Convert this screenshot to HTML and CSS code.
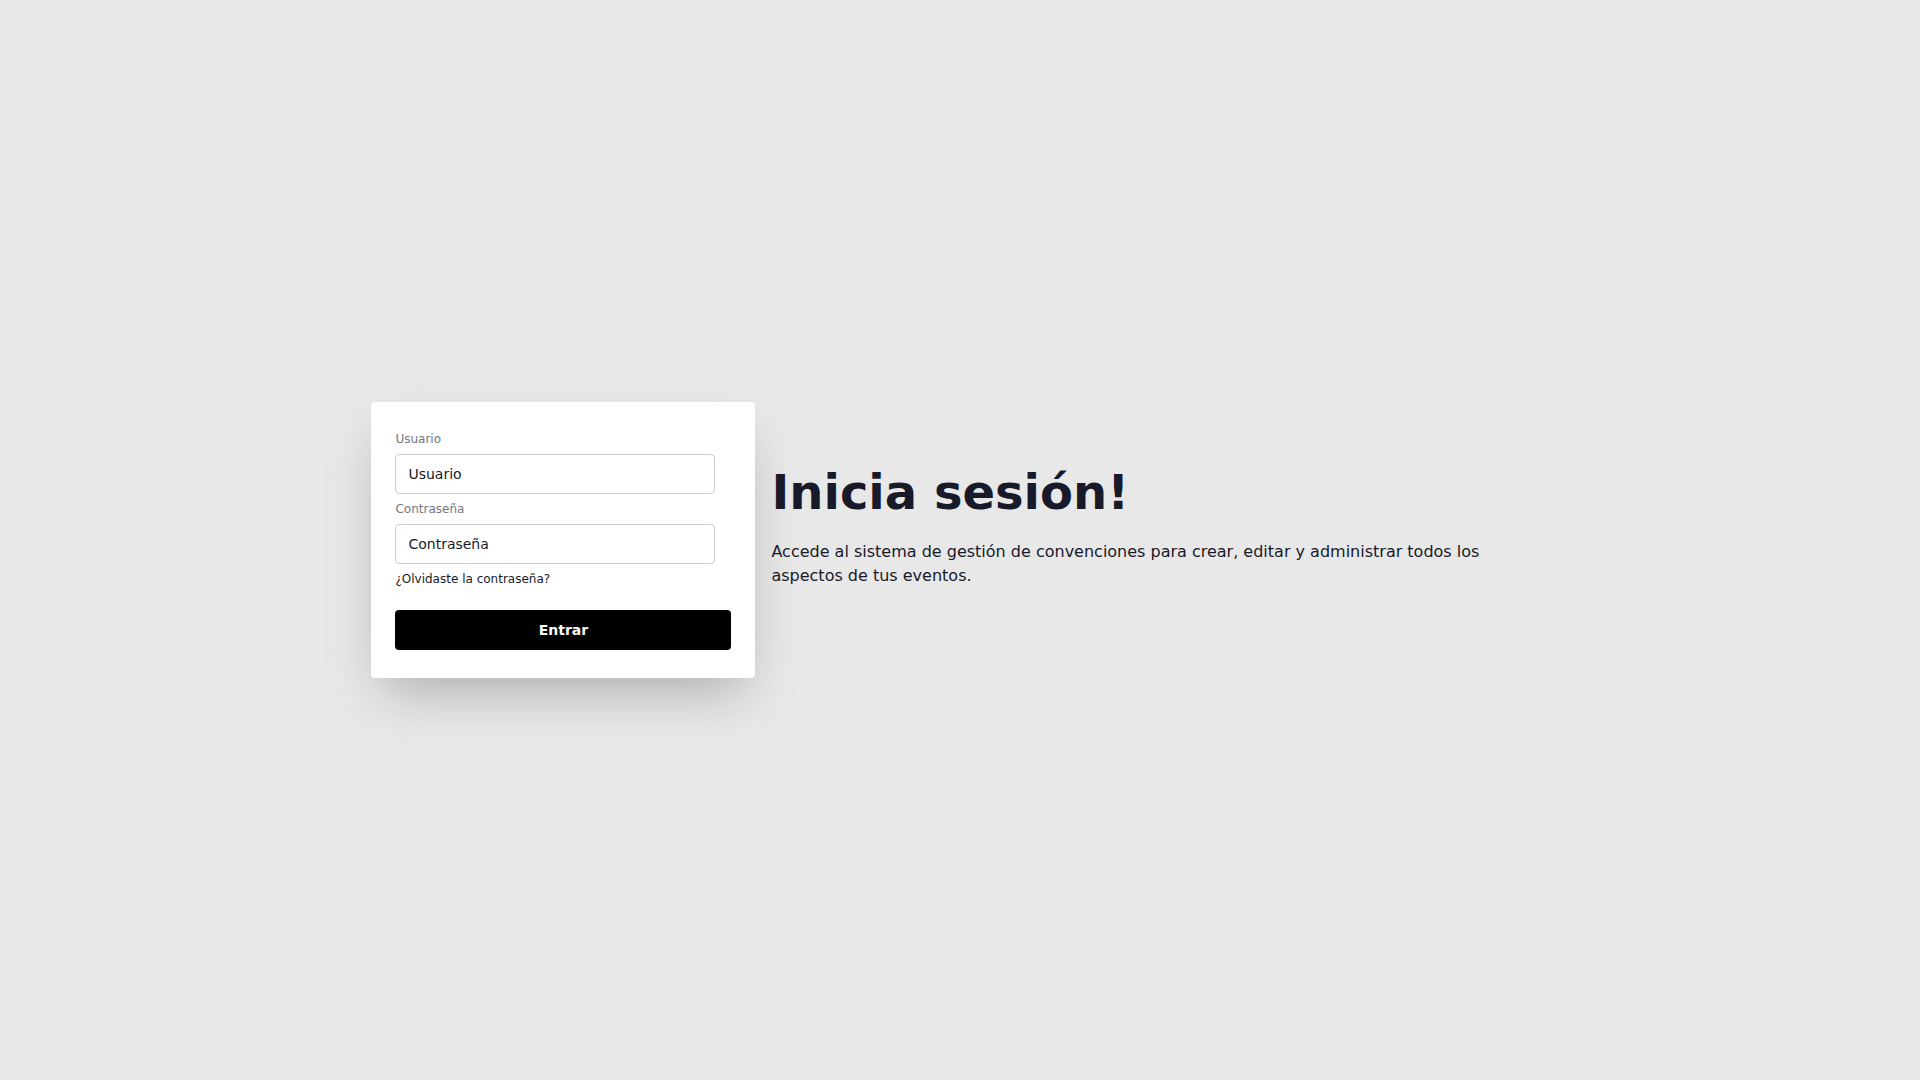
FILE: index.html
```
<!DOCTYPE html>
<html lang="es">
<head>
  <meta charset="UTF-8">
  <meta name="viewport" content="width=device-width, initial-scale=1">
  <title>Inicia sesión</title>
  <link rel="stylesheet" href="styles.css">
</head>
<body>
  <main class="hero">
    <div class="hero-content">
      <form class="card">
        <label class="label" for="usuario">Usuario</label>
        <input class="input" type="text" id="usuario" name="usuario" placeholder="Usuario">
        <label class="label" for="password">Contraseña</label>
        <input class="input" type="password" id="password" name="password" placeholder="Contraseña">
        <a class="forgot" href="#">¿Olvidaste la contraseña?</a>
        <button class="btn" type="submit">Entrar</button>
      </form>
      <div class="intro">
        <h1>Inicia sesión!</h1>
        <p>Accede al sistema de gestión de convenciones para crear, editar y administrar todos los aspectos de tus eventos.</p>
      </div>
    </div>
  </main>
</body>
</html>
```

FILE: styles.css
```
* {
  box-sizing: border-box;
}

body {
  margin: 0;
  background-color: #e8e8e8;
  color: #181a2a;
  font-family: "DejaVu Sans", sans-serif;
  font-size: 16px;
  line-height: 24px;
}

.hero {
  display: flex;
  align-items: center;
  justify-content: center;
  min-height: 100vh;
}

.hero-content {
  display: flex;
  align-items: center;
  gap: 16px;
  max-width: 1210px;
  padding: 16px;
}

/* login card */
.card {
  display: flex;
  flex-direction: column;
  align-items: flex-start;
  flex-shrink: 0;
  width: 100%;
  max-width: 384px;
  padding: 22px 24px 28px;
  border-radius: 4px;
  background-color: #fff;
  box-shadow: 0 25px 50px -12px rgba(0, 0, 0, 0.25);
}

.label,
.forgot {
  font-size: 12px;
  line-height: 30px;
}

.label {
  color: #747681;
}

.forgot {
  color: inherit;
  text-decoration: none;
}

.forgot:hover {
  text-decoration: underline;
}

.input {
  width: 100%;
  max-width: 320px;
  height: 40px;
  padding: 0 12px;
  border: 1px solid #cbcbce;
  border-radius: 4px;
  background-color: #fff;
  color: inherit;
  font-family: inherit;
  font-size: 14px;
}

.input::placeholder {
  color: #181a2a;
}

.btn {
  width: 100%;
  height: 40px;
  margin-top: 16px;
  border: 0;
  border-radius: 4px;
  background-color: #000;
  color: #fff;
  font-family: inherit;
  font-size: 14px;
  font-weight: bold;
  cursor: pointer;
}

.intro h1 {
  margin: 0;
  font-size: 48px;
  line-height: 48px;
}

.intro p {
  margin: 0;
  padding: 24px 0;
}

@media (max-width: 1024px) {
  .hero-content {
    flex-direction: column-reverse;
  }

  .intro {
    text-align: center;
  }
}
```
